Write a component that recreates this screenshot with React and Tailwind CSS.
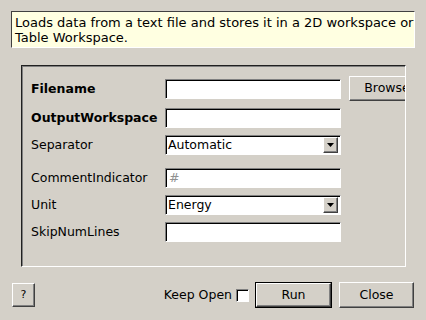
const sunken =
  "border border-t-[#808080] border-l-[#808080] border-r-white border-b-white shadow-[inset_1px_1px_0_#000]"
const raised =
  "border border-t-white border-l-white border-r-[#404040] border-b-[#404040] shadow-[inset_-1px_-1px_0_#808080]"

function TextBox({ placeholder }) {
  return (
    <div className={`w-[176px] h-[20px] shrink-0 bg-white flex items-center pl-[3px] ${sunken}`}>
      {placeholder && <span className="text-[#909090]">{placeholder}</span>}
    </div>
  )
}

function Combo({ value }) {
  return (
    <div className={`w-[176px] h-[20px] shrink-0 bg-white flex items-center pl-[2px] pr-[2px] ${sunken}`}>
      <span className="flex-1 leading-none">{value}</span>
      <div className={`w-[15px] h-[16px] bg-[#d4d0c8] flex items-center justify-center ${raised}`}>
        <svg width="7" height="4" viewBox="0 0 7 4">
          <polygon points="0,0 7,0 3.5,4" fill="#000" />
        </svg>
      </div>
    </div>
  )
}

function Row({ label, bold, children, className = "" }) {
  return (
    <div className={`flex items-center shrink-0 ${className}`}>
      <div className={`w-[134px] shrink-0 whitespace-nowrap pt-[1px] ${bold ? "font-bold" : ""}`}>{label}</div>
      {children}
    </div>
  )
}

export default function App() {
  return (
    <div className="w-[426px] h-[320px] bg-[#d4d0c8] text-[12.5px] text-black flex flex-col overflow-hidden font-['DejaVu_Sans',sans-serif]">
      {/* description */}
      <div className="mx-[11px] mt-[11px] h-[37px] shrink-0 bg-[#ffffe1] border border-t-[#404040] border-l-[#404040] border-r-white border-b-white pl-[3px] pt-[3px] text-[13px] leading-[15px] whitespace-nowrap">
        Loads data from a text file and stores it in a 2D workspace or
        <br />
        Table Workspace.
      </div>

      {/* properties group */}
      <div className="ml-[21px] mt-[17px] w-[385px] h-[202px] shrink-0 border border-t-[#202020] border-l-[#202020] border-r-white border-b-white shadow-[inset_1px_1px_0_#808080] overflow-hidden pl-[9px] pt-[10px] flex flex-col">
        <Row label="Filename" bold className="h-[25px]">
          <TextBox />
          <div className={`ml-[8px] w-[76px] h-[25px] shrink-0 flex items-center justify-center ${raised}`}>
            Browse
          </div>
        </Row>
        <Row label="OutputWorkspace" bold className="h-[20px] mt-[7px]">
          <TextBox />
        </Row>
        <Row label="Separator" className="h-[20px] mt-[7px]">
          <Combo value="Automatic" />
        </Row>
        <Row label="CommentIndicator" className="h-[20px] mt-[13px]">
          <TextBox placeholder="#" />
        </Row>
        <Row label="Unit" className="h-[20px] mt-[7px]">
          <Combo value="Energy" />
        </Row>
        <Row label="SkipNumLines" className="h-[20px] mt-[7px]">
          <TextBox />
        </Row>
      </div>

      {/* buttons */}
      <div className="mt-[15px] h-[26px] shrink-0 flex items-center pl-[12px] pr-[12px]">
        <div className={`w-[23px] h-[24px] flex items-center justify-center text-[11px] ${raised}`}>?</div>
        <div className="flex-1" />
        <span className="whitespace-nowrap">Keep Open</span>
        <div className={`ml-[4px] w-[13px] h-[13px] bg-white ${sunken}`} />
        <div className="ml-[6px] w-[77px] h-[26px] border border-black">
          <div className={`w-full h-full flex items-center justify-center ${raised}`}>Run</div>
        </div>
        <div className={`ml-[7px] w-[75px] h-[26px] flex items-center justify-center ${raised}`}>Close</div>
      </div>
    </div>
  )
}
